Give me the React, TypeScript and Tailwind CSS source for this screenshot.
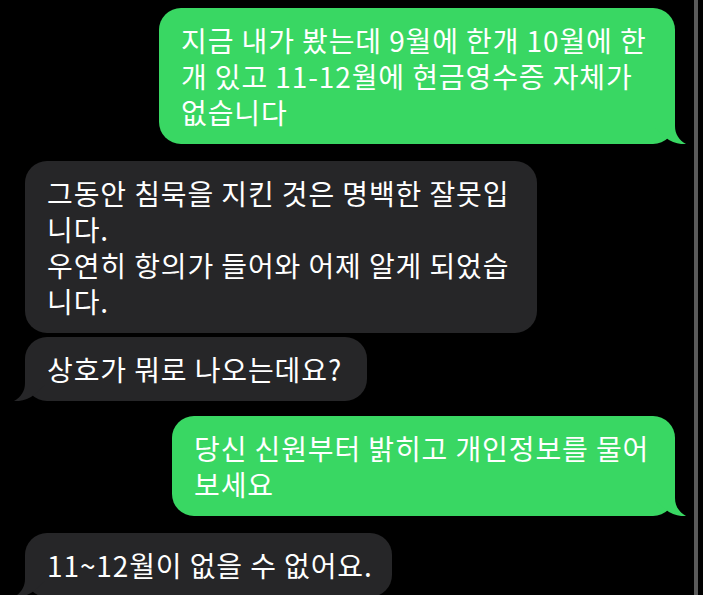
const GREEN = '#39d763';
const GRAY = '#262628';

function Tail({ side, color }: { side: 'left' | 'right'; color: string }) {
  const pos = side === 'right' ? 'right-[-11px]' : 'left-[-11px] -scale-x-100';
  return (
    <svg
      className={`absolute bottom-0 ${pos}`}
      width="31"
      height="26"
      viewBox="0 0 31 26"
      fill={color}
    >
      <path d="M20,0 L20,8 C20,16 24,22 31,26 C25,26.6 17,25 10,19 L0,10 L0,0 Z" />
    </svg>
  );
}

function Bubble({
  lines,
  side,
  width,
  tail = true,
  className = '',
}: {
  lines: string[];
  side: 'left' | 'right';
  width: string;
  tail?: boolean;
  className?: string;
}) {
  const color = side === 'right' ? GREEN : GRAY;
  return (
    <div
      className={`relative rounded-[22px] py-[14px] pl-[22px] pr-[6px] text-[28px] leading-[36px] tracking-[0.9px] text-white whitespace-nowrap ${width} ${
        side === 'right' ? 'self-end mr-[19px] bg-[#39d763]' : 'self-start ml-[25px] bg-[#262628]'
      } ${className}`}
    >
      <p>
        {lines.map((l, i) => (
          <span key={i}>
            {i > 0 && <br />}
            {l}
          </span>
        ))}
      </p>
      {tail && <Tail side={side} color={color} />}
    </div>
  );
}

export default function App() {
  return (
    <div
      className="flex h-[595px] w-[703px] overflow-hidden bg-black"
      style={{ fontFamily: '"Noto Sans CJK KR", "Noto Sans", sans-serif' }}
    >
      <div className="flex flex-1 flex-col pt-[8px]">
        <Bubble
          side="right"
          width="w-[516px]"
          lines={['지금 내가 봤는데 9월에 한개 10월에 한', '개 있고 11-12월에 현금영수증 자체가', '없습니다']}
        />
        <Bubble
          side="left"
          width="w-[512px]"
          tail={false}
          className="mt-[17px]"
          lines={['그동안 침묵을 지킨 것은 명백한 잘못입', '니다.', '우연히 항의가 들어와 어제 알게 되었습', '니다.']}
        />
        <Bubble side="left" width="w-[342px]" className="mt-[4px]" lines={['상호가 뭐로 나오는데요?']} />
        <Bubble
          side="right"
          width="w-[503px]"
          className="mt-[15px]"
          lines={['당신 신원부터 밝히고 개인정보를 물어', '보세요']}
        />
        <Bubble side="left" width="w-[367px]" className="mt-[17px]" lines={['11~12월이 없을 수 없어요.']} />
      </div>
      <div className="mr-[5px] w-[4px] bg-[#5a5a5a]" />
    </div>
  );
}
